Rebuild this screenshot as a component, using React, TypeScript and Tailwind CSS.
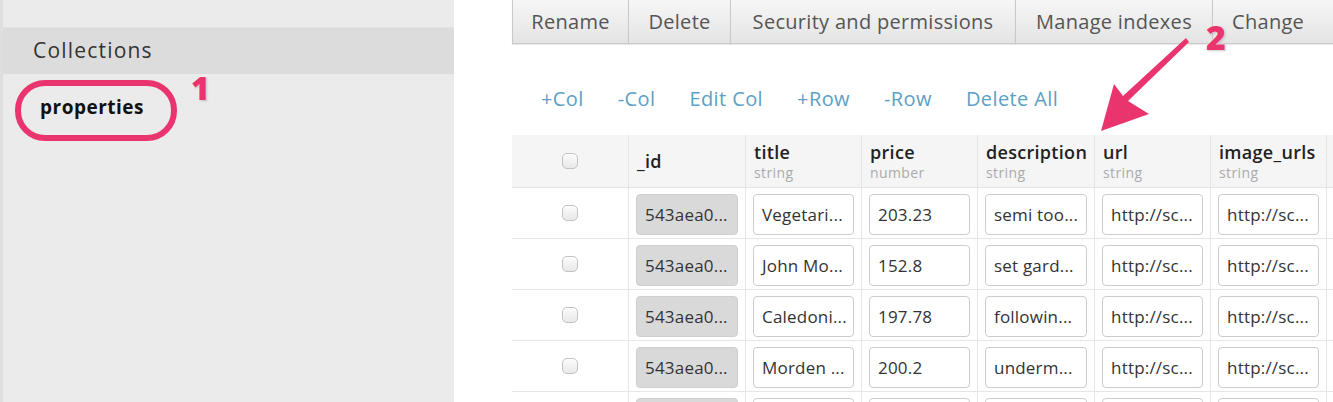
import React from "react";

const tabs = [
  { label: "Rename", w: "w-[116px] justify-center" },
  { label: "Delete", w: "w-[102px] justify-center" },
  { label: "Security and permissions", w: "w-[285px] justify-center" },
  { label: "Manage indexes", w: "w-[197px] justify-center" },
  { label: "Change", w: "w-[140px] pl-[19px]" },
];

const actions = ["+Col", "-Col", "Edit Col", "+Row", "-Row", "Delete All"];

const columns = [
  { name: "_id", type: "" },
  { name: "title", type: "string" },
  { name: "price", type: "number" },
  { name: "description", type: "string" },
  { name: "url", type: "string" },
  { name: "image_urls", type: "string" },
];

const rows = [
  ["543aea0...", "Vegetari...", "203.23", "semi too...", "http://sc...", "http://sc..."],
  ["543aea0...", "John Mo...", "152.8", "set gard...", "http://sc...", "http://sc..."],
  ["543aea0...", "Caledoni...", "197.78", "followin...", "http://sc...", "http://sc..."],
  ["543aea0...", "Morden ...", "200.2", "underm...", "http://sc...", "http://sc..."],
  ["", "", "", "", "", ""],
];

const Checkbox = () => (
  <span className="block w-[16px] h-[16px] rounded-[5px] border border-[#c2c2c2] bg-gradient-to-b from-[#fcfcfc] to-[#e8e8e8] shadow-[inset_0_1px_1px_rgba(255,255,255,0.8)]" />
);

const App = () => {
  return (
    <div className="relative flex w-[1333px] h-[402px] overflow-hidden bg-white font-['Open_Sans',sans-serif]">
      {/* sidebar */}
      <aside className="w-[454px] shrink-0 h-full bg-[#ebebeb] border-l-[3px] border-[#dedede]">
        <div className="h-[28px] border-b border-[#e2e2e2]" />
        <div className="h-[46px] bg-[#dcdcdc] flex items-center pl-[30px] text-[21px] tracking-[1.2px] text-[#333]">
          Collections
        </div>
        <div className="relative h-[70px] pl-[37px] pt-[19px]">
          <span className="text-[19px] font-bold tracking-[0.5px] text-[#111]">properties</span>
          <span className="absolute left-[12px] top-[6px] w-[162px] h-[61px] rounded-[30px] border-[6px] border-[#ea346e]" />
          <span className="absolute left-[188px] top-[-2px] text-[32px] font-extrabold leading-none text-[#ea346e] [text-shadow:0_0_2px_#fff,1px_1px_2px_rgba(0,0,0,0.25)]">
            1
          </span>
        </div>
      </aside>

      <div className="w-[58px] shrink-0" />

      {/* main */}
      <main className="flex-1 min-w-0">
        <div className="flex h-[44px]">
          {tabs.map((t) => (
            <div
              key={t.label}
              className={`${t.w} shrink-0 flex items-center text-[20px] tracking-[0.3px] text-[#555] bg-gradient-to-b from-[#f6f6f6] to-[#e4e4e4] border-l border-b border-[#c9c9c9] shadow-[0_1px_1px_rgba(0,0,0,0.08)]`}
            >
              {t.label}
            </div>
          ))}
        </div>

        <div className="flex gap-[34px] pl-[29px] pt-[40px] h-[91px] text-[20px] tracking-[0.4px] text-[#5d9fc5]">
          {actions.map((a) => (
            <span key={a}>{a}</span>
          ))}
        </div>

        <div className="w-[940px]">
          <div className="grid grid-cols-[117px_117px_116px_116px_117px_116px_116px_50px] h-[53px] bg-[#f5f5f5] border-b border-[#e3e3e3]">
            <div className="flex items-center justify-center border-r border-[#e6e6e6]">
              <Checkbox />
            </div>
            {columns.map((c) => (
              <div
                key={c.name}
                className="flex flex-col justify-center pl-[8px] border-r border-[#e6e6e6] leading-[1.25]"
              >
                <span className="text-[18px] font-semibold tracking-[0.3px] text-[#222]">{c.name}</span>
                {c.type && <span className="text-[14px] tracking-[0.4px] text-[#aaa]">{c.type}</span>}
              </div>
            ))}
            <div />
          </div>

          {rows.map((r, i) => (
            <div
              key={i}
              className="grid grid-cols-[117px_117px_116px_116px_117px_116px_116px_50px] h-[51px] border-b border-[#e6e6e6]"
            >
              <div className="flex items-center justify-center border-r border-[#e6e6e6]">
                <Checkbox />
              </div>
              {r.map((v, j) => (
                <div key={j} className="px-[7px] pt-[6px] border-r border-[#e6e6e6]">
                  <div
                    className={`h-[41px] rounded-[4px] flex items-center pl-[8px] text-[17px] tracking-[0.2px] text-[#333] whitespace-nowrap overflow-hidden ${
                      j === 0
                        ? "bg-[#d9d9d9] border border-[#cfcfcf]"
                        : "bg-white border border-[#cccccc]"
                    }`}
                  >
                    {v}
                  </div>
                </div>
              ))}
              <div />
            </div>
          ))}
        </div>
      </main>

      {/* annotation arrow 2 */}
      <svg className="absolute left-0 top-0 pointer-events-none" width="1333" height="402">
        <polygon
          points="1186,38 1189,42 1128,101 1149,114 1101,131 1114,84 1123,96"
          fill="#ea346e"
        />
      </svg>
      <span className="absolute left-[1206px] top-[20px] text-[34px] font-extrabold leading-none text-[#ea346e] [text-shadow:0_0_2px_#fff,1px_1px_2px_rgba(0,0,0,0.25)]">
        2
      </span>
    </div>
  );
};

export default App;
